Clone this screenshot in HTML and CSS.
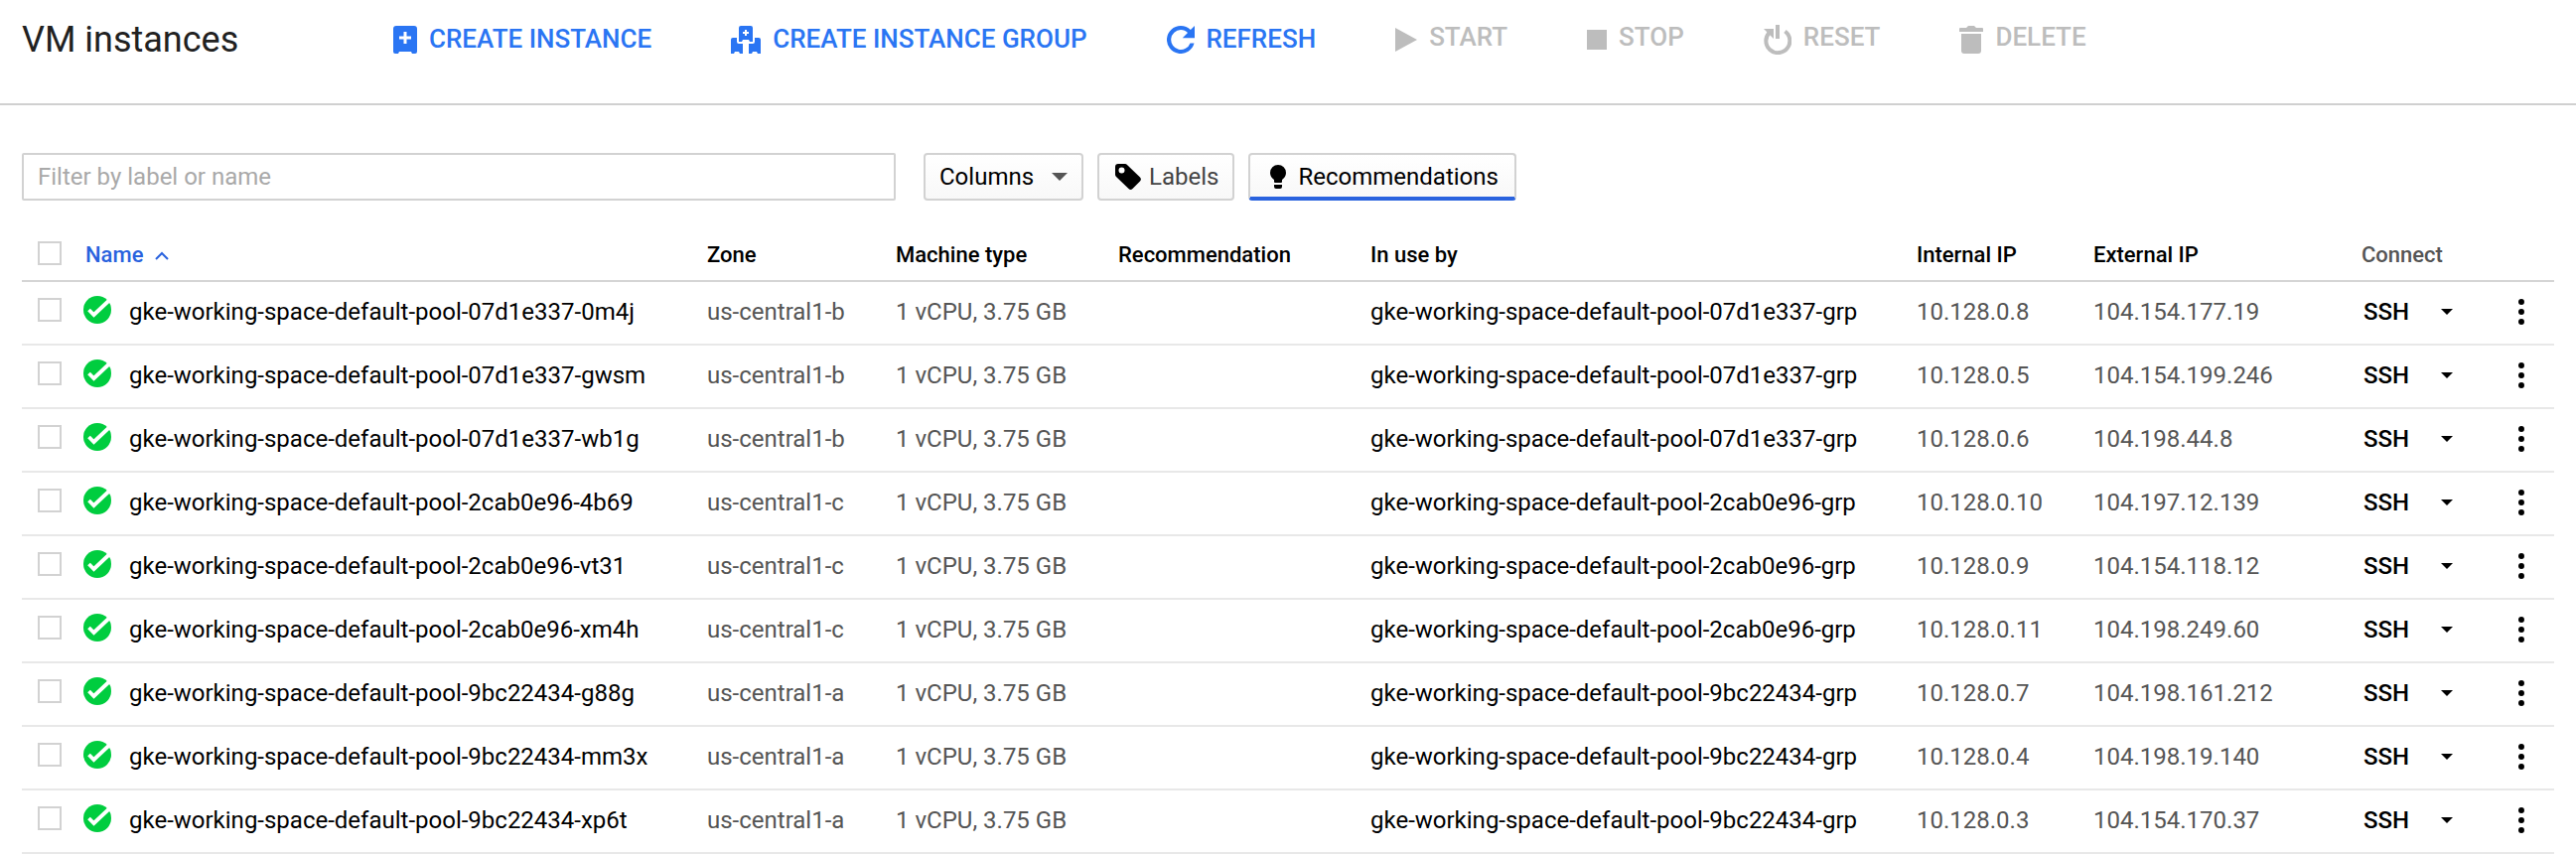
FILE: index.html
```html
<!DOCTYPE html>
<html lang="en">
<head>
<meta charset="utf-8">
<title>VM instances</title>
<link rel="stylesheet" href="styles.css">
</head>
<body>
<svg class="sprite" aria-hidden="true">
  <symbol id="ok" viewBox="0 0 28 28"><circle cx="14" cy="14" r="14" fill="#00cd3f"/><path d="M5.500 14l5 5L27 3.500" fill="none" stroke="#fff" stroke-width="3.800"/></symbol>
  <symbol id="caret" viewBox="0 0 12 6"><path d="M0 0h12L6 6z"/></symbol>
  <symbol id="dots" viewBox="0 0 6 26"><circle cx="3" cy="3" r="3"/><circle cx="3" cy="13" r="3"/><circle cx="3" cy="23" r="3"/></symbol>
</svg>
<header class="toolbar">
  <h1 class="title">VM instances</h1>
  <nav class="actions" aria-label="Instance actions">
    <button class="action" type="button"><svg class="icon i-create" viewBox="0 0 24 28"><path fill-rule="evenodd" d="M3 0h18a3 3 0 0 1 3 3v23a2 2 0 0 1-2 2h-3l-1-2H6l-1 2H2a2 2 0 0 1-2-2V3a3 3 0 0 1 3-3zM10.500 6v4.500H6v3h4.500V18h3v-4.500H18v-3h-4.500V6z"/></svg><span>CREATE INSTANCE</span></button>
    <button class="action" type="button"><svg class="icon i-group" viewBox="0 0 30 28"><path fill-rule="evenodd" d="M10 0h10a2 2 0 0 1 2 2v14h-3l-1-2h-6l-1 2H8V2a2 2 0 0 1 2-2zM14 4v2h-2v2h2v2h2V8h2V6h-2V4zM0 14a2 2 0 0 1 2-2h4v4a2 2 0 0 0 2 2h4v10H9l-1-2H4l-1 2H0zM30 14a2 2 0 0 0-2-2h-4v4a2 2 0 0 1-2 2h-4v10h3l1-2h4l1 2h3z"/></svg><span>CREATE INSTANCE GROUP</span></button>
    <button class="action" type="button"><svg class="icon i-refresh" viewBox="4 4 16 16"><path d="M17.650 6.350A7.950 7.950 0 0 0 12 4a8 8 0 1 0 7.730 10h-2.300A5.700 5.700 0 1 1 12 6.300c1.600 0 3 .600 4 1.700L13 11h7V4z"/></svg><span>REFRESH</span></button>
    <button class="action off" type="button" disabled><svg class="icon i-start" viewBox="0 0 22 24"><path d="M0 0l22 12L0 24z"/></svg><span>START</span></button>
    <button class="action off" type="button" disabled><svg class="icon i-stop" viewBox="0 0 20 20"><path d="M0 0h20v20H0z"/></svg><span>STOP</span></button>
    <button class="action off" type="button" disabled><svg class="icon i-reset" viewBox="0 0 28 30"><path d="M12 0h4v14h-4z"/><path d="M6 7.500a12 12 0 1 0 15.500-1" fill="none" stroke="currentColor" stroke-width="4"/><path d="M0 4h10v10z"/></svg><span>RESET</span></button>
    <button class="action off" type="button" disabled><svg class="icon i-delete" viewBox="0 0 24 28"><path d="M1 2h6l2-2h6l2 2h6a1 1 0 0 1 1 1v3H0V3a1 1 0 0 1 1-1zM2 8h20v17a3 3 0 0 1-3 3H5a3 3 0 0 1-3-3z"/></svg><span>DELETE</span></button>
  </nav>
</header>
<main class="content">
  <div class="filters">
    <input class="filter" type="text" placeholder="Filter by label or name" aria-label="Filter by label or name">
    <div class="options">
      <button class="option columns" type="button" aria-haspopup="true">Columns<svg class="icon i-down" viewBox="0 0 16 8"><path d="M0 0h16L8 8z"/></svg></button>
      <button class="option labels" type="button"><svg class="icon i-tag" viewBox="0 0 26 26"><path fill-rule="evenodd" d="M3 0h7a3 3 0 0 1 2 1L25 13.500a3 3 0 0 1 0 4L17.500 25a3 3 0 0 1-4 0L1 13a3 3 0 0 1-1-2V3a3 3 0 0 1 3-3zM6.500 3.500a3 3 0 1 0 0 6 3 3 0 0 0 0-6z"/></svg>Labels</button>
      <button class="option active" type="button" aria-pressed="true"><svg class="icon i-bulb" viewBox="0 0 16 24"><path d="M8 0a8 8 0 0 1 8 8c0 3-1.500 5-4 7v2a1 1 0 0 1-1 1H5a1 1 0 0 1-1-1v-2c-2.500-2-4-4-4-7a8 8 0 0 1 8-8zM4 20h8v2a2 2 0 0 1-2 2H6a2 2 0 0 1-2-2z"/></svg>Recommendations</button>
    </div>
  </div>
  <table class="instances">
    <colgroup><col class="c-check"><col class="c-name"><col class="c-zone"><col class="c-type"><col class="c-rec"><col class="c-use"><col class="c-int"><col class="c-ext"><col class="c-con"><col class="c-menu"></colgroup>
    <thead>
      <tr><th><input class="check" type="checkbox" aria-label="Select all instances"></th><th class="sorted" aria-sort="ascending"><button class="sort" type="button">Name<svg class="i-up" viewBox="0 0 14 9"><path d="M1 8l6-6 6 6" fill="none" stroke="currentColor" stroke-width="2"/></svg></button></th><th>Zone</th><th>Machine type</th><th>Recommendation</th><th>In use by</th><th>Internal IP</th><th>External IP</th><th class="plain">Connect</th><th></th></tr>
    </thead>
    <tbody id="rows"></tbody>
  </table>
</main>
<script src="app.js"></script>
</body>
</html>
```
FILE: app.js
```js
const instances = [
  ["07d1e337", "0m4j", "b", "10.128.0.8", "104.154.177.19"],
  ["07d1e337", "gwsm", "b", "10.128.0.5", "104.154.199.246"],
  ["07d1e337", "wb1g", "b", "10.128.0.6", "104.198.44.8"],
  ["2cab0e96", "4b69", "c", "10.128.0.10", "104.197.12.139"],
  ["2cab0e96", "vt31", "c", "10.128.0.9", "104.154.118.12"],
  ["2cab0e96", "xm4h", "c", "10.128.0.11", "104.198.249.60"],
  ["9bc22434", "g88g", "a", "10.128.0.7", "104.198.161.212"],
  ["9bc22434", "mm3x", "a", "10.128.0.4", "104.198.19.140"],
  ["9bc22434", "xp6t", "a", "10.128.0.3", "104.154.170.37"]
];

document.getElementById("rows").innerHTML = instances.map(([pool, id, zone, internal, external]) => {
  const base = `gke-working-space-default-pool-${pool}`;
  return `<tr>
    <td><input class="check" type="checkbox" aria-label="Select ${base}-${id}"></td>
    <td><div class="name"><svg class="i-ok" role="img" aria-label="Running"><use href="#ok"/></svg><a class="link" href="#">${base}-${id}</a></div></td>
    <td>us-central1-${zone}</td>
    <td>1 vCPU, 3.75 GB</td>
    <td></td>
    <td><a class="link" href="#">${base}-grp</a></td>
    <td>${internal}</td>
    <td>${external}</td>
    <td><div class="connect"><button class="ssh" type="button">SSH</button><button class="more" type="button" aria-label="SSH options"><svg class="i-caret"><use href="#caret"/></svg></button></div></td>
    <td><button class="menu" type="button" aria-label="More actions"><svg class="i-dots"><use href="#dots"/></svg></button></td>
  </tr>`;
}).join("");
```
FILE: styles.css
```css
* { box-sizing: border-box; }
body { margin: 0; background: #fff; color: #000; font: 24px/32px Roboto, "Liberation Sans", sans-serif; }
button { margin: 0; padding: 0; border: 0; background: none; color: inherit; font: inherit; white-space: nowrap; }
svg { display: block; flex: none; fill: currentColor; }
.sprite { position: absolute; width: 0; height: 0; }

.toolbar { display: flex; align-items: flex-start; padding: 16px 22px 40px; border-bottom: 2px solid #d0d0d0; }
.title { flex: none; width: 374px; margin: 0; color: #212121; font-size: 36px; font-weight: 400; line-height: 48px; }
.actions { display: flex; gap: 80px; }
.action { display: flex; align-items: center; gap: 12px; height: 48px; color: #2a75f3; font-size: 26px; font-weight: 500; }
.action span { padding-bottom: 2px; }
.action.off { color: #bdbdbd; }
.action.off span { padding-bottom: 6px; }
.i-create, .i-delete { width: 24px; height: 28px; }
.i-group { width: 30px; height: 28px; }
.i-refresh { width: 28px; height: 28px; }
.i-start { width: 22px; height: 24px; }
.i-stop { width: 20px; height: 20px; }
.i-reset { width: 28px; height: 30px; }

.content { padding: 48px 22px 0; }
.filters { display: flex; gap: 28px; }
.filter { width: 880px; height: 48px; padding: 0 14px; border: 2px solid #d2d2d2; border-radius: 2px; background: #fff; color: #000; font: inherit; }
.filter::placeholder { color: #a9a9a9; }
.options { display: flex; gap: 14px; }
.option { display: flex; align-items: center; gap: 8px; height: 48px; padding: 0 14px; border: 2px solid #d2d2d2; border-radius: 4px; background: linear-gradient(#fff, #f8f8f8); }
.columns { gap: 18px; }
.labels { padding-left: 16px; color: #444; }
.active { padding: 2px 16px 0 20px; gap: 12px; border-bottom: 4px solid #2962de; }
.i-down { width: 16px; height: 8px; color: #555; }
.i-tag { width: 26px; height: 26px; color: #000; }
.i-bulb { width: 16px; height: 24px; }

.instances { width: 100%; margin-top: 26px; border-collapse: separate; border-spacing: 0; table-layout: fixed; color: #555; }
.c-check { width: 62px; }
.c-name { width: 628px; }
.c-zone { width: 190px; }
.c-type { width: 224px; }
.c-rec { width: 254px; }
.c-use { width: 550px; }
.c-int { width: 178px; }
.c-ext { width: 270px; }
.c-con { width: 132px; }
.c-menu { width: 62px; }
th { height: 56px; padding: 4px 0 0; border-bottom: 2px solid #d5d5d5; color: #000; font-size: 22px; font-weight: 500; text-align: left; white-space: nowrap; }
td { height: 64px; padding: 0 0 2px; border-bottom: 2px solid #e8e8e8; white-space: nowrap; }
.plain { color: #555; }
.sort { display: flex; align-items: center; gap: 12px; padding-left: 2px; color: #2962de; }
.i-up { width: 14px; height: 9px; }
.check { display: block; width: 24px; height: 24px; margin: 0 0 4px 16px; border: 2px solid #d2d2d2; background: #fff; appearance: none; }
.name { display: flex; align-items: center; gap: 18px; }
.i-ok { width: 28px; height: 28px; margin-bottom: 4px; }
.link { color: #000; text-decoration: none; }
.connect { display: flex; align-items: center; gap: 32px; padding-left: 2px; color: #000; }
.ssh { font-weight: 500; }
.i-caret { width: 12px; height: 6px; }
.menu { display: block; margin-left: 26px; color: #000; }
.i-dots { width: 6px; height: 26px; }
```
